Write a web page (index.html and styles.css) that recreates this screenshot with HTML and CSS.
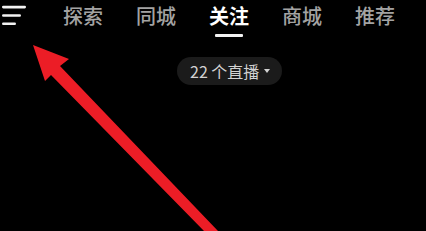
FILE: index.html
```html
<!DOCTYPE html>
<html lang="zh-CN">
<head>
<meta charset="utf-8">
<title>关注</title>
<link rel="stylesheet" href="styles.css">
</head>
<body>
<div class="screen">
  <header class="topbar">
    <svg class="menu" width="26" height="22" viewBox="0 0 26 22">
      <rect x="0" y="5.8" width="24" height="2.6" rx="1.3" fill="#f2f2f2"/>
      <rect x="0" y="14.2" width="19" height="2.6" rx="1.3" fill="#f2f2f2"/>
      <rect x="0" y="22.4" width="14" height="2.6" rx="1.3" fill="#f2f2f2"/>
    </svg>
    <nav class="tabs">
      <div class="tab"><span class="label">探索</span></div>
      <div class="tab"><span class="label">同城</span></div>
      <div class="tab active"><span class="label">关注</span><span class="bar"></span></div>
      <div class="tab"><span class="label">商城</span></div>
      <div class="tab"><span class="label">推荐</span></div>
    </nav>
  </header>
  <div class="live-row">
    <div class="pill">22 个直播<span class="caret"></span></div>
  </div>
  <svg class="arrow" width="426" height="231" viewBox="0 0 426 231">
    <polygon points="33,45 69,59 60,66 218,231 204,231 51,75 45,81" fill="#ec1d26"/>
  </svg>
</div>
</body>
</html>
```
FILE: styles.css
```css
html, body {
  margin: 0;
  padding: 0;
  background: #000;
}
body {
  width: 426px;
  height: 231px;
  overflow: hidden;
  font-family: "Noto Sans CJK SC", "Noto Sans", sans-serif;
}
.screen {
  position: relative;
  width: 426px;
  height: 231px;
  background: #000;
}
.topbar {
  display: flex;
  align-items: flex-start;
  padding-left: 2px;
  height: 40px;
}
.menu {
  overflow: visible;
  flex: none;
}
.tabs {
  display: flex;
  gap: 33px;
  margin-left: 35px;
}
.tab {
  display: flex;
  flex-direction: column;
  align-items: center;
  width: 40px;
}
.label {
  font-size: 20px;
  line-height: 32px;
  color: #a3a3a3;
  font-weight: 500;
  white-space: nowrap;
}
.tab.active .label {
  color: #fff;
  font-weight: 700;
}
.bar {
  display: block;
  width: 28px;
  height: 3px;
  margin-top: 2px;
  background: #f2f2f2;
  border-radius: 1px;
}
.live-row {
  display: flex;
  padding-left: 177px;
  margin-top: 17px;
}
.pill {
  display: flex;
  align-items: center;
  height: 28px;
  width: 105px;
  box-sizing: border-box;
  padding-left: 13px;
  border-radius: 14px;
  background: #1b1b1b;
  color: #d2d2d2;
  font-size: 16px;
  white-space: nowrap;
}
.caret {
  display: block;
  width: 0;
  height: 0;
  margin-left: 5px;
  border-left: 3px solid transparent;
  border-right: 3px solid transparent;
  border-top: 4px solid #d2d2d2;
}
.arrow {
  position: absolute;
  left: 0;
  top: 0;
  pointer-events: none;
}
```
